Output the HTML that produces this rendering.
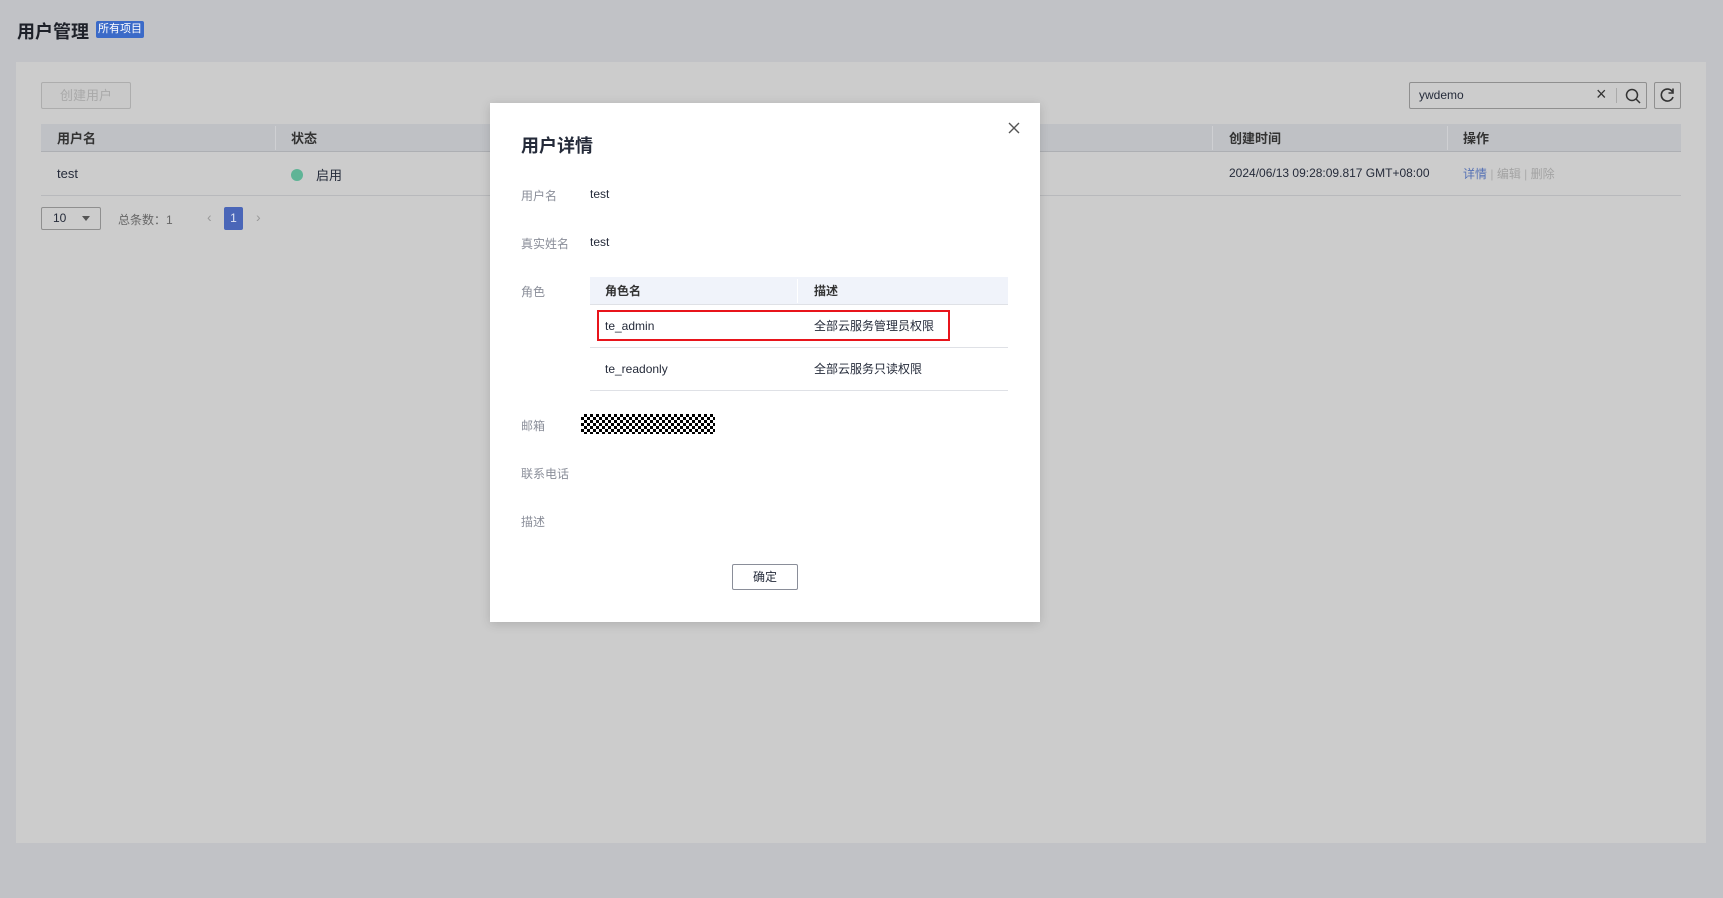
<!DOCTYPE html>
<html><head><meta charset="utf-8"><style>
*{margin:0;padding:0;box-sizing:border-box}
body{width:1723px;height:898px;background:#c1c2c6;font-family:"Liberation Sans","Noto Sans CJK SC",sans-serif;font-size:13px;color:#252b3a;position:relative;overflow:hidden}
.a{position:absolute}
.t{white-space:nowrap}
</style></head><body>
<div class="a t" style="left:17px;top:18px;font-size:18px;font-weight:bold;color:#1e2129">用户管理</div>
<div class="a t" style="left:96px;top:21px;width:48px;height:17px;background:#3b6ac8;color:#fff;font-size:11px;line-height:17px;text-align:center;border-radius:2px">所有项目</div>
<div class="a" style="left:16px;top:62px;width:1690px;height:781px;background:#cccccc"></div>
<div class="a t" style="left:41px;top:82px;width:90px;height:27px;border:1px solid #adadad;border-radius:2px;color:#a9a9a9;text-align:center;line-height:25px;background:#c9c9c9">创建用户</div>
<div class="a" style="left:1409px;top:82px;width:238px;height:27px;border:1px solid #8f8f8f;border-radius:2px"></div>
<div class="a t" style="left:1419px;top:88px;font-size:12px">ywdemo</div>
<div class="a t" style="left:1596px;top:84px;font-size:18px;color:#333">×</div>
<div class="a" style="left:1616px;top:88px;width:1px;height:15px;background:#aaa"></div>
<svg class="a" style="left:1624px;top:87px" width="18" height="18" viewBox="0 0 18 18"><circle cx="8" cy="8" r="5.5" fill="none" stroke="#333" stroke-width="1.5"/><path d="M12 12l4 4" stroke="#333" stroke-width="1.5"/></svg>
<div class="a" style="left:1654px;top:82px;width:27px;height:27px;border:1px solid #8f8f8f;border-radius:2px"></div>
<svg class="a" style="left:1658px;top:86px" width="19" height="19" viewBox="0 0 19 19"><path d="M14.5 6A6 6 0 1 0 15 11" fill="none" stroke="#333" stroke-width="1.6"/><path d="M15 2.5v4.5h-4.5" fill="none" stroke="#333" stroke-width="1.6"/></svg>
<div class="a" style="left:41px;top:124px;width:1640px;height:28px;background:#bfc1c5;border-bottom:1px solid #adafb3"></div>
<div class="a" style="left:275px;top:126px;width:1px;height:24px;background:#cfd0d3"></div>
<div class="a" style="left:1212px;top:126px;width:1px;height:24px;background:#cfd0d3"></div>
<div class="a" style="left:1447px;top:126px;width:1px;height:24px;background:#cfd0d3"></div>
<div class="a t" style="left:57px;top:128px;font-weight:bold;color:#333">用户名</div>
<div class="a t" style="left:291px;top:128px;font-weight:bold;color:#333">状态</div>
<div class="a t" style="left:1229px;top:128px;font-weight:bold;color:#333">创建时间</div>
<div class="a t" style="left:1463px;top:128px;font-weight:bold;color:#333">操作</div>
<div class="a t" style="left:57px;top:166px">test</div>
<div class="a" style="left:291px;top:169px;width:12px;height:12px;border-radius:50%;background:#5fb496"></div>
<div class="a t" style="left:316px;top:165px">启用</div>
<div class="a t" style="left:1229px;top:166px;font-size:12px">2024/06/13 09:28:09.817 GMT+08:00</div>
<div class="a t" style="left:1463px;top:165px;font-size:12px;color:#5571b5">详情 <span style="color:#aaa">|</span> <span style="color:#a3a3a3">编辑</span> <span style="color:#aaa">|</span> <span style="color:#a3a3a3">删除</span></div>
<div class="a" style="left:41px;top:195px;width:1640px;height:1px;background:#b8b9bc"></div>
<div class="a" style="left:41px;top:207px;width:60px;height:23px;border:1px solid #8f8f8f;border-radius:2px"></div>
<div class="a t" style="left:53px;top:211px;font-size:12px">10</div>
<div class="a" style="left:82px;top:216px;border-left:4px solid transparent;border-right:4px solid transparent;border-top:5px solid #555"></div>
<div class="a t" style="left:118px;top:211px;font-size:12px;color:#666">总条数：1</div>
<div class="a t" style="left:207px;top:209px;color:#999;font-size:14px">‹</div>
<div class="a" style="left:224px;top:207px;width:19px;height:23px;background:#4a66b8;border-radius:2px;color:#dfe4f3;text-align:center;line-height:23px;font-size:12px">1</div>
<div class="a t" style="left:256px;top:209px;color:#999;font-size:14px">›</div>

<div class="a" style="left:490px;top:103px;width:550px;height:519px;background:#fff;box-shadow:0 2px 10px rgba(0,0,0,.15)"></div>
<div class="a t" style="left:521px;top:132px;font-size:18px;font-weight:bold;color:#252b3a">用户详情</div>
<svg class="a" style="left:1007px;top:121px" width="14" height="14" viewBox="0 0 14 14"><path d="M2 2l10 10M12 2L2 12" stroke="#555" stroke-width="1.4"/></svg>
<div class="a t" style="left:521px;top:187px;color:#8a8e99;font-size:12px">用户名</div>
<div class="a t" style="left:590px;top:187px;font-size:12px">test</div>
<div class="a t" style="left:521px;top:235px;color:#8a8e99;font-size:12px">真实姓名</div>
<div class="a t" style="left:590px;top:235px;font-size:12px">test</div>
<div class="a t" style="left:521px;top:283px;color:#8a8e99;font-size:12px">角色</div>
<div class="a" style="left:590px;top:277px;width:418px;height:28px;background:#f0f3fa;border-bottom:1px solid #dfe1e6"></div>
<div class="a" style="left:797px;top:279px;width:1px;height:24px;background:#fff"></div>
<div class="a t" style="left:605px;top:282px;font-size:12px;font-weight:bold;color:#333">角色名</div>
<div class="a t" style="left:814px;top:282px;font-size:12px;font-weight:bold;color:#333">描述</div>
<div class="a t" style="left:605px;top:319px;font-size:12px">te_admin</div>
<div class="a t" style="left:814px;top:317px;font-size:12px">全部云服务管理员权限</div>
<div class="a" style="left:597px;top:310px;width:353px;height:31px;border:2px solid #e8141b"></div>
<div class="a" style="left:590px;top:347px;width:418px;height:1px;background:#dfe1e6"></div>
<div class="a t" style="left:605px;top:362px;font-size:12px">te_readonly</div>
<div class="a t" style="left:814px;top:360px;font-size:12px">全部云服务只读权限</div>
<div class="a" style="left:590px;top:390px;width:418px;height:1px;background:#dfe1e6"></div>
<div class="a t" style="left:521px;top:417px;color:#8a8e99;font-size:12px">邮箱</div>
<div class="a" style="left:581px;top:414px;width:134px;height:20px;background:repeating-conic-gradient(#000 0 25%,#fff 0 50%) 0 0/6px 6px"></div>
<div class="a t" style="left:521px;top:465px;color:#8a8e99;font-size:12px">联系电话</div>
<div class="a t" style="left:521px;top:513px;color:#8a8e99;font-size:12px">描述</div>
<div class="a" style="left:732px;top:564px;width:66px;height:26px;border:1px solid #8a8e99;border-radius:2px;text-align:center;line-height:24px;font-size:12px">确定</div>
</body></html>
